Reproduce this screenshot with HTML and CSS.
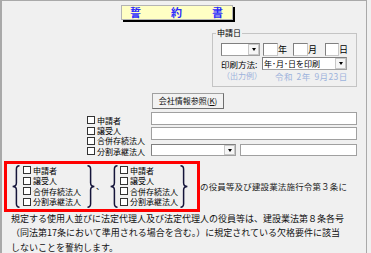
FILE: index.html
```html
<!DOCTYPE html>
<html lang="ja">
<head>
<meta charset="utf-8">
<title>誓約書</title>
<link rel="stylesheet" href="styles.css">
</head>
<body>
<div class="frame">
  <div class="title-row">
    <div class="title"><span>誓</span><span>約</span><span>書</span></div>
  </div>

  <fieldset class="date-group">
    <legend>申請日</legend>
    <div class="row r1">
      <div class="combo c-era"><span class="combo-text"></span><span class="arrow"></span></div>
      <div class="tbox"></div><span class="unit u-year">年</span>
      <div class="tbox"></div><span class="unit u-month">月</span>
      <div class="tbox t-day"></div><span class="unit">日</span>
    </div>
    <div class="row r2">
      <span class="plabel">印刷方法:</span>
      <div class="combo c-print"><span class="combo-text">年･月･日を印刷</span><span class="arrow"></span></div>
    </div>
    <div class="row r3">
      <span class="ex-label">（出力例）</span>
      <span class="ex-value">令和 2年 9月23日</span>
    </div>
  </fieldset>

  <div class="btn-row"><button class="btn" type="button">会社情報参照(<u>K</u>)</button></div>

  <div class="applicant">
    <ul class="checks upper">
      <li><span class="cb"></span>申請者</li>
      <li><span class="cb"></span>譲受人</li>
      <li><span class="cb"></span>合併存続法人</li>
      <li><span class="cb"></span>分割承継法人</li>
    </ul>
    <div class="fields">
      <div class="input"></div>
      <div class="input i2"></div>
      <div class="field-row">
        <div class="combo c-split"><span class="combo-text"></span><span class="arrow"></span></div>
        <div class="input i3"></div>
      </div>
    </div>
  </div>

  <div class="oath-row">
    <div class="highlight">
      <svg class="brace" width="8" height="43" viewBox="0 0 8 43"><path d="M7.5 0.8C5.2 0.8 4.4 1.8 4.4 4.2V18C4.4 20.4 3.2 21.5 0.6 21.5C3.2 21.5 4.4 22.6 4.4 25V38.8C4.4 41.2 5.2 42.2 7.5 42.2"/></svg>
      <ul class="checks g1">
        <li><span class="cb"></span>申請者</li>
        <li><span class="cb"></span>譲受人</li>
        <li><span class="cb"></span>合併存続法人</li>
        <li><span class="cb"></span>分割承継法人</li>
      </ul>
      <svg class="brace" width="8" height="43" viewBox="0 0 8 43"><path d="M0.5 0.8C2.8 0.8 3.6 1.8 3.6 4.2V18C3.6 20.4 4.8 21.5 7.4 21.5C4.8 21.5 3.6 22.6 3.6 25V38.8C3.6 41.2 2.8 42.2 0.5 42.2"/></svg>
      <span class="comma">、</span>
      <svg class="brace" width="8" height="43" viewBox="0 0 8 43"><path d="M7.5 0.8C5.2 0.8 4.4 1.8 4.4 4.2V18C4.4 20.4 3.2 21.5 0.6 21.5C3.2 21.5 4.4 22.6 4.4 25V38.8C4.4 41.2 5.2 42.2 7.5 42.2"/></svg>
      <ul class="checks g2">
        <li><span class="cb"></span>申請者</li>
        <li><span class="cb"></span>譲受人</li>
        <li><span class="cb"></span>合併存続法人</li>
        <li><span class="cb"></span>分割承継法人</li>
      </ul>
      <svg class="brace" width="8" height="43" viewBox="0 0 8 43"><path d="M0.5 0.8C2.8 0.8 3.6 1.8 3.6 4.2V18C3.6 20.4 4.8 21.5 7.4 21.5C4.8 21.5 3.6 22.6 3.6 25V38.8C3.6 41.2 2.8 42.2 0.5 42.2"/></svg>
    </div>
    <span class="tail">の役員等及び建設業法施行令第３条に</span>
  </div>

  <p class="oath">規定する使用人並びに法定代理人及び法定代理人の役員等は、建設業法第８条各号<br>（同法第17条において準用される場合を含む。）に規定されている欠格要件に該当<br>しないことを誓約します。</p>
</div>
</body>
</html>
```

FILE: styles.css
```css
html, body {
  margin: 0;
  padding: 0;
  background: #f0f0f0;
}

body {
  font-family: "Noto Sans CJK JP", "Noto Sans", sans-serif;
  color: #000;
}

.frame {
  width: 364px;
  min-height: 252px;
  border-left: 2px solid #a9a9a9;
  border-top: 1px solid #a9a9a9;
  border-right: 1px solid #a9a9a9;
  overflow: hidden;
}

/* Title */
.title-row {
  display: flex;
  padding: 4px 0 0 119px;
}

.title {
  width: 112px;
  height: 15px;
  box-sizing: border-box;
  border: 1px solid #b4b4b4;
  background: #ffffc4;
  box-shadow: 2px 2px 0 #000;
  display: flex;
  justify-content: space-between;
  align-items: center;
  padding: 0 9px 0 8px;
  color: #2b2bff;
  font-weight: bold;
  font-size: 11px;
  line-height: 13px;
}

/* Date group */
.date-group {
  margin: 8px 0 0 210px;
  width: 145px;
  box-sizing: border-box;
  border: 1px solid #c4c4c4;
  padding: 5px 0 5px 8px;
  min-inline-size: 0;
  font-size: 8px;
  line-height: 10px;
}

.date-group legend {
  margin-left: -5px;
  padding: 0 1px;
  font-size: 8px;
  line-height: 10px;
}

.row {
  display: flex;
  align-items: center;
}

.r1, .r2 {
  height: 13px;
}

.r2 {
  margin-top: 1px;
}

.r3 {
  margin-top: 1px;
  height: 10px;
  color: #9db3dc;
}

.combo {
  display: flex;
  height: 13px;
  box-sizing: border-box;
  border: 1px solid #a0a0a0;
  border-top-color: #808080;
  border-left-color: #808080;
  background: #fff;
}

.combo-text {
  flex: 1;
  font-size: 8px;
  line-height: 11px;
  padding-left: 1px;
  white-space: nowrap;
  overflow: hidden;
}

.arrow {
  width: 11px;
  box-sizing: border-box;
  border: 1px solid #c8c8c8;
  background: #f6f6f6;
  display: flex;
  align-items: center;
  justify-content: center;
}

.arrow::after {
  content: "";
  border-left: 2.5px solid transparent;
  border-right: 2.5px solid transparent;
  border-top: 3px solid #000;
}

.c-era {
  width: 39px;
}

.tbox {
  width: 15px;
  height: 13px;
  box-sizing: border-box;
  border: 1px solid #808080;
  border-right-color: #c8c8c8;
  border-bottom-color: #c8c8c8;
  background: #fff;
  margin-left: 3px;
  flex: none;
}

.unit {
  font-size: 9px;
  line-height: 10px;
}

.u-year {
  width: 12px;
}

.u-month {
  width: 14px;
}

.t-day {
  width: 14px;
}

.plabel {
  width: 41px;
  font-size: 8.5px;
  white-space: nowrap;
}

.c-print {
  width: 85px;
}

.ex-label {
  width: 53px;
  white-space: nowrap;
  padding-left: 1px;
}

.ex-value {
  white-space: nowrap;
  font-size: 8.5px;
  letter-spacing: 0.4px;
  word-spacing: 1.5px;
}

/* Button */
.btn-row {
  display: flex;
  padding-left: 150px;
  margin-top: 6px;
}

.btn {
  width: 72px;
  height: 16px;
  box-sizing: border-box;
  padding: 0;
  margin: 0;
  border: 1px solid #a0a0a0;
  border-right-color: #6e6e6e;
  border-bottom-color: #6e6e6e;
  border-radius: 0;
  background: #f2f2f2;
  font-family: "Noto Sans CJK JP", sans-serif;
  font-size: 8px;
  line-height: 14px;
  color: #111;
  white-space: nowrap;
}

/* Applicant section */
.applicant {
  display: flex;
  margin-top: 3px;
}

.checks {
  list-style: none;
  margin: 0;
  padding: 0;
  font-size: 8px;
}

.checks li {
  display: flex;
  align-items: center;
  height: 10.4px;
  white-space: nowrap;
}

.cb {
  flex: none;
  width: 8px;
  height: 8px;
  box-sizing: border-box;
  border: 1px solid #333;
  background: #fff;
  margin-right: 2px;
}

.upper {
  margin: 3px 0 0 85px;
  width: 64px;
}

.fields {
  width: 206px;
}

.input {
  height: 13px;
  box-sizing: border-box;
  border: 1px solid #a0a0a0;
  background: #fff;
}

.i2 {
  margin-top: 2px;
}

.field-row {
  display: flex;
  margin-top: 4px;
  gap: 4px;
}

.c-split {
  width: 85px;
  height: 12px;
}

.i3 {
  flex: 1;
  height: 12px;
}

/* Highlighted oath subjects */
.oath-row {
  display: flex;
  align-items: center;
  margin-top: 4px;
  padding-left: 2px;
}

.highlight {
  width: 196px;
  height: 51px;
  box-sizing: border-box;
  border: 3px solid #ff0000;
  display: flex;
  align-items: center;
  padding-left: 5px;
  flex: none;
}

.brace {
  flex: none;
  display: block;
}

.brace path {
  fill: none;
  stroke: #15153a;
  stroke-width: 1.5;
}

.g1 {
  width: 64px;
  margin-left: 3px;
}

.g2 {
  width: 60px;
  margin-left: 2px;
}

.g1 li, .g2 li {
  height: 10.5px;
}

.comma {
  width: 14px;
  margin-left: 1px;
  font-size: 8px;
  line-height: 10px;
}

.tail {
  font-size: 8.5px;
  letter-spacing: 0.15px;
  white-space: nowrap;
  color: #222;
}

.oath {
  margin: 0;
  padding-left: 9px;
  font-size: 9px;
  line-height: 14.5px;
  white-space: nowrap;
  color: #111;
}
```
